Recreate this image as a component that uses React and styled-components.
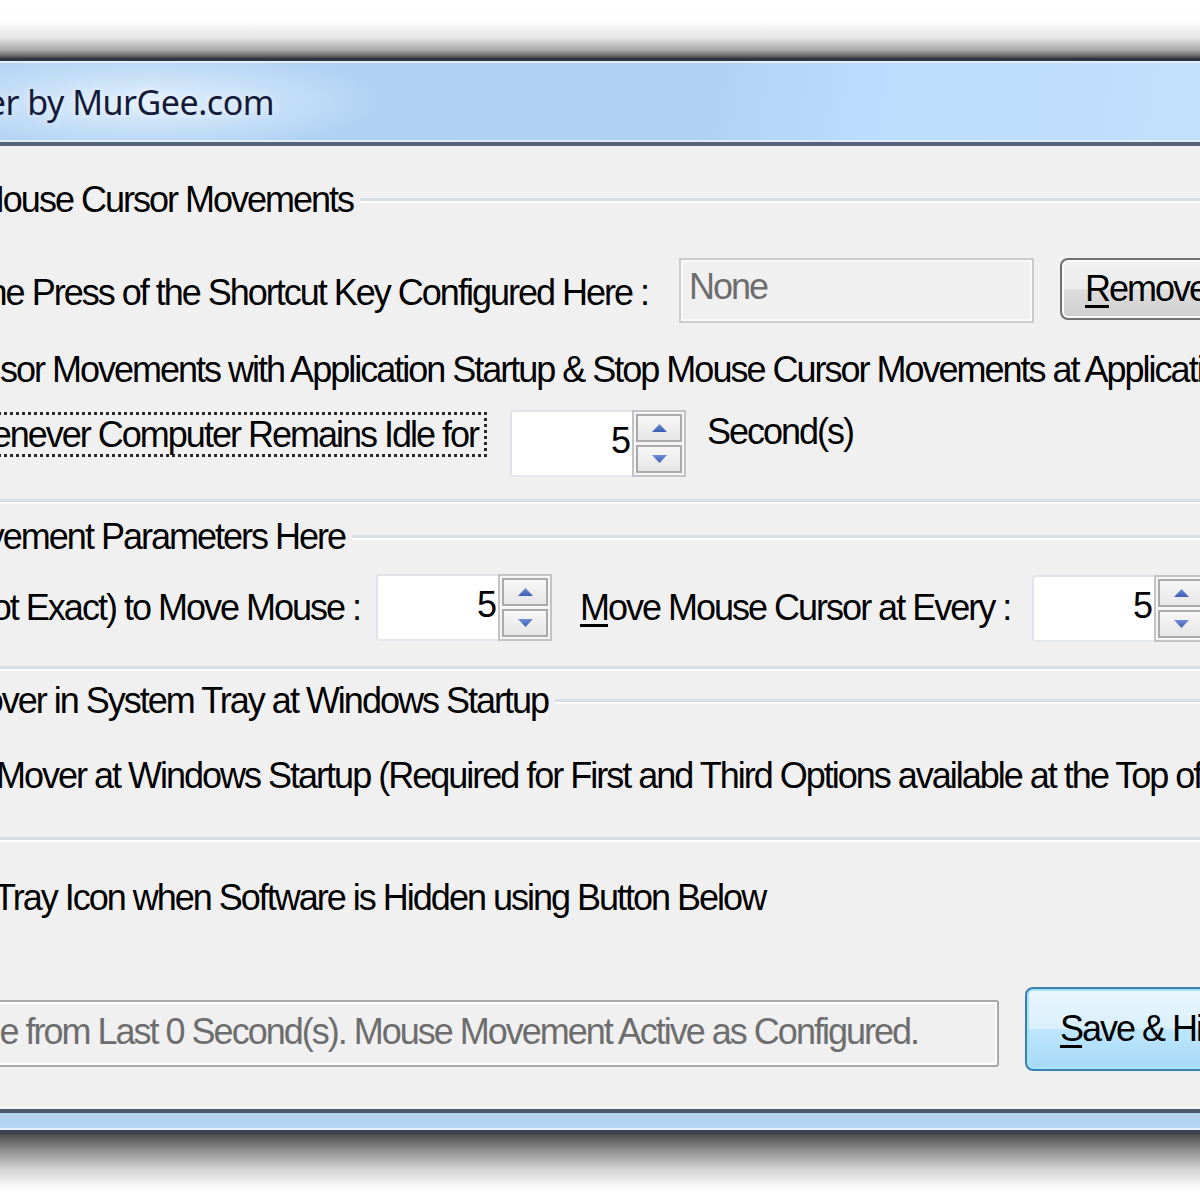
import React from 'react'
import styled, { createGlobalStyle } from 'styled-components'

const GlobalStyle = createGlobalStyle`
  html, body { margin: 0; padding: 0; background: #fff; }
`

const uiFont = `"Liberation Sans", Arial, sans-serif`

const Screen = styled.div`
  width: 1200px;
  height: 1200px;
  overflow: hidden;
  background: #fff;
  display: flex;
  flex-direction: column;
  font-family: ${uiFont};
  font-size: 36px;
  letter-spacing: -2px;
  color: #000;
`

const ShadowTop = styled.div`
  flex: none;
  height: 58px;
  background: linear-gradient(to bottom, #fff 0px, #fdfdfd 22px, #e4e4e4 38px, #a8a8a8 50px, #666 56px, #444 58px);
`

const TitleBar = styled.div`
  flex: none;
  height: 88px;
  box-sizing: border-box;
  border-top: 3px solid #2d3743;
  border-bottom: 4px solid #52637a;
  box-shadow: inset 0 2px 0 #e4eefa, inset 0 -2px 0 #e1ecf8;
  background:
    radial-gradient(ellipse 230px 48px at 150px 50%, rgba(226, 240, 253, 0.95), rgba(226, 240, 253, 0) 100%),
    linear-gradient(100deg, #b4d4f4 0%, #b0d1f3 58%, #bbdcfc 72%, #c3e0fc 100%);
  display: flex;
  align-items: center;
`

const TitleText = styled.div`
  width: 274px;
  flex: none;
  display: flex;
  justify-content: flex-end;
  white-space: nowrap;
  font-family: "Noto Sans", "Open Sans", sans-serif;
  font-size: 34px;
  letter-spacing: -0.5px;
  color: #141a3a;
  text-shadow: 0 0 10px rgba(255, 255, 255, 0.8);
`

const Body = styled.div`
  flex: none;
  height: 961px;
  background: #f0f0f0;
  display: flex;
  flex-direction: column;
`

const GroupHeader = styled.div`
  display: flex;
  align-items: center;
  height: 40px;
  margin-top: ${p => p.$mt}px;
`

const Cell = styled.div`
  flex: none;
  width: ${p => p.$w}px;
  margin-left: ${p => p.$ml || 0}px;
  margin-top: ${p => p.$mt || 0}px;
  display: flex;
  justify-content: ${p => (p.$left ? 'flex-start' : 'flex-end')};
  white-space: nowrap;
  line-height: 40px;
`

const EtchLine = styled.div`
  flex: 1;
  margin-left: 7px;
  border-top: 3px solid #d5dfe5;
  border-bottom: 2px solid #fff;
`

const GroupEnd = styled.div`
  margin-top: ${p => p.$mt}px;
  border-top: 3px solid #d5dfe5;
  border-bottom: 2px solid #fff;
`

const Row = styled.div`
  display: flex;
  align-items: flex-start;
  height: ${p => p.$h}px;
  margin-top: ${p => p.$mt}px;
`

const LineText = styled.div`
  white-space: nowrap;
  line-height: 40px;
  margin-left: ${p => p.$ml || 0}px;
`

const Key = styled.span`
  text-decoration: underline;
  text-underline-offset: 4px;
  text-decoration-thickness: 3px;
`

const DisabledField = styled.div`
  flex: none;
  width: 355px;
  height: 65px;
  margin-left: 31px;
  box-sizing: border-box;
  border: 2px solid #cbcbcb;
  box-shadow: inset 0 0 0 2px #fafafa;
  background: #f0f0f0;
  color: #6d6d6d;
  padding: 0 0 8px 8px;
  display: flex;
  align-items: center;
  white-space: nowrap;
`

const PushButton = styled.div`
  flex: none;
  width: 220px;
  height: ${p => p.$h}px;
  margin-left: ${p => p.$ml}px;
  box-sizing: border-box;
  border-radius: 8px;
  display: flex;
  align-items: center;
  white-space: nowrap;
  padding-left: ${p => p.$pl}px;
  border: 2px solid ${p => (p.$focused ? '#3c7fb1' : '#707070')};
  box-shadow: inset 0 0 0 2px ${p => (p.$focused ? '#a3e4fb' : '#fbfbfb')};
  background: ${p =>
    p.$focused
      ? 'linear-gradient(#eaf6fd 0%, #d9f0fc 50%, #bee6fd 50%, #a7d9f5 100%)'
      : 'linear-gradient(#f2f2f2 0%, #ebebeb 50%, #dddddd 50%, #cfcfcf 100%)'};
`

const FocusBox = styled.div`
  flex: none;
  height: 45px;
  margin-top: 2px;
  box-sizing: border-box;
  border: 3px dotted #2a2a2a;
  padding-right: 6px;
  display: flex;
  align-items: center;
  white-space: nowrap;
  line-height: 40px;
`

const SpinBox = styled.div`
  flex: none;
  width: 176px;
  height: 67px;
  margin-left: ${p => p.$ml}px;
  margin-top: ${p => p.$mt || 0}px;
  box-sizing: border-box;
  display: flex;
  background: #fff;
  border: 2px solid;
  border-color: #e2e3ea #e6e8ec #e3e9ef #e2e3ea;
  border-radius: 4px;
`

const SpinValue = styled.div`
  flex: 1;
  display: flex;
  justify-content: flex-end;
  align-items: center;
  padding-right: 3px;
  padding-bottom: 6px;
`

const SpinButtons = styled.div`
  flex: none;
  width: 54px;
  margin: -2px -2px -2px 0;
  box-sizing: border-box;
  border: 2px solid #c3c3c3;
  background: #f6f6f6;
  padding: 2px;
  display: flex;
  flex-direction: column;
  gap: 3px;
`

const SpinButton = styled.div`
  flex: 1;
  box-sizing: border-box;
  border: 2px solid #aaaaaa;
  background: linear-gradient(#f7f7f7, #e6e6e6);
  display: flex;
  align-items: center;
  justify-content: center;
`

const StatusBox = styled.div`
  flex: none;
  width: 1019px;
  height: 67px;
  margin-left: -20px;
  margin-top: 13px;
  box-sizing: border-box;
  border: 2px solid #a8a8a8;
  border-radius: 3px;
  box-shadow: inset 0 0 0 2px #fff;
  background: #f0f0f0;
  color: #6d6d6d;
  overflow: hidden;
  display: flex;
  justify-content: flex-end;
  align-items: center;
  padding: 0 79px 4px 0;
  white-space: nowrap;
`

const BottomFrame = styled.div`
  flex: none;
  height: 27px;
  background: linear-gradient(to bottom,
    #f7f7f7 0px, #f7f7f7 2px,
    #475768 2px, #475768 6px,
    #b3d2f1 6px, #b6d5f3 21px,
    #e6f0fa 21px, #e6f0fa 23px,
    #394250 23px, #394250 27px);
`

const ShadowBottom = styled.div`
  flex: 1;
  background: linear-gradient(to bottom, #4b4b4b 0px, #8d8d8d 16px, #cfcfcf 34px, #f4f4f4 50px, #fff 58px);
`

const Arrow = ({ up }) => (
  <svg width="15" height="8" viewBox="0 0 15 8">
    <defs>
      <linearGradient id={up ? 'au' : 'ad'} x1="0" y1="0" x2="0" y2="1">
        <stop offset="0" stopColor="#6f8fd8" />
        <stop offset="1" stopColor="#3d5db4" />
      </linearGradient>
    </defs>
    <polygon points={up ? '0,8 7.5,0 15,8' : '0,0 15,0 7.5,8'} fill={`url(#${up ? 'au' : 'ad'})`} />
  </svg>
)

const Spin = ({ value, ml, mt }) => (
  <SpinBox $ml={ml} $mt={mt}>
    <SpinValue>{value}</SpinValue>
    <SpinButtons>
      <SpinButton><Arrow up /></SpinButton>
      <SpinButton><Arrow /></SpinButton>
    </SpinButtons>
  </SpinBox>
)

export default function App() {
  return (
    <Screen>
      <GlobalStyle />
      <ShadowTop />
      <TitleBar>
        <TitleText>Mouse Mover by MurGee.com</TitleText>
      </TitleBar>
      <Body>
        <GroupHeader $mt={34}>
          <Cell $w={353}>Mouse Cursor Movements</Cell>
          <EtchLine />
        </GroupHeader>

        <Row $h={66} $mt={38}>
          <Cell $w={648} $mt={15}>the Press of the Shortcut Key Configured Here :</Cell>
          <DisabledField>None</DisabledField>
          <PushButton $h={62} $ml={26} $pl={23}><Key>R</Key>emove</PushButton>
        </Row>

        <Row $h={40} $mt={26}>
          <LineText>sor Movements with Application Startup &amp; Stop Mouse Cursor Movements at Application Close</LineText>
        </Row>

        <Row $h={67} $mt={20}>
          <Cell $w={487}>
            <FocusBox>Whenever Computer Remains Idle for</FocusBox>
          </Cell>
          <Spin value="5" ml={23} />
          <Cell $w={200} $ml={21} $mt={2} $left>Second(s)</Cell>
        </Row>

        <GroupEnd $mt={22} />

        <GroupHeader $mt={13}>
          <Cell $w={345}>Movement Parameters Here</Cell>
          <EtchLine />
        </GroupHeader>

        <Row $h={67} $mt={17}>
          <Cell $w={360} $mt={14}>(Not Exact) to Move Mouse :</Cell>
          <Spin value="5" ml={16} />
          <Cell $w={425} $ml={28} $mt={14} $left><span><Key>M</Key>ove Mouse Cursor at Every :</span></Cell>
          <Spin value="5" ml={27} mt={1} />
        </Row>

        <GroupEnd $mt={25} />

        <GroupHeader $mt={10}>
          <Cell $w={548}>Mover in System Tray at Windows Startup</Cell>
          <EtchLine />
        </GroupHeader>

        <Row $h={40} $mt={35}>
          <LineText $ml={-4}>Mover at Windows Startup (Required for First and Third Options available at the Top of this Window)</LineText>
        </Row>

        <GroupEnd $mt={41} />

        <Row $h={40} $mt={36}>
          <LineText $ml={-6}>Tray Icon when Software is Hidden using Button Below</LineText>
        </Row>

        <Row $h={84} $mt={69}>
          <StatusBox>Idle from Last 0 Second(s). Mouse Movement Active as Configured.</StatusBox>
          <PushButton $h={84} $ml={26} $pl={33} $focused><Key>S</Key>ave &amp; Hide</PushButton>
        </Row>
      </Body>
      <BottomFrame />
      <ShadowBottom />
    </Screen>
  )
}
